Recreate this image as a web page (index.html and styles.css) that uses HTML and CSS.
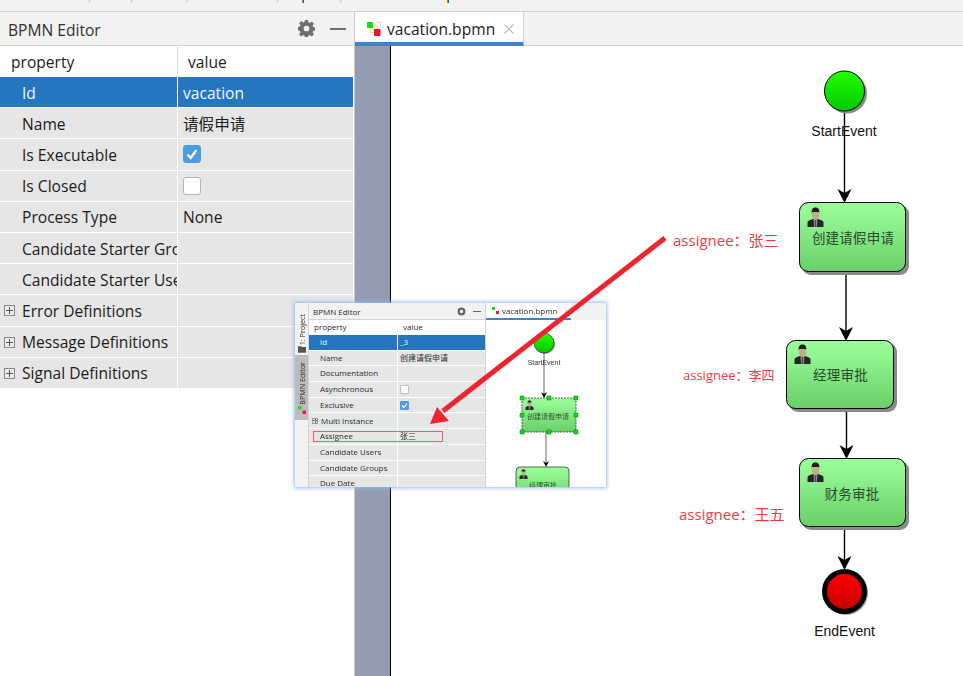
FILE: index.html
```html
<!DOCTYPE html>
<html lang="zh">
<head>
  <meta charset="UTF-8" />
  <title>BPMN Editor</title>
  <link rel="stylesheet" href="styles.css">
</head>
<body>
  <svg class="defs" width="0" height="0">
    <defs>
      <linearGradient id="g-start" x1="0" y1="0" x2="0" y2="1"><stop offset="0" stop-color="#26ff00"/><stop offset="1" stop-color="#00c800"/></linearGradient>
      <linearGradient id="g-end" x1="0" y1="0" x2="0" y2="1"><stop offset="0" stop-color="#ff0000"/><stop offset="1" stop-color="#c80000"/></linearGradient>
      <linearGradient id="g-task" x1="0" y1="0" x2="0" y2="1"><stop offset="0" stop-color="#9cff9c"/><stop offset="1" stop-color="#69d069"/></linearGradient>
      <symbol id="user" viewBox="0 0 17 20">
        <path d="M0.500 20V15.500C0.500 13.800 3 12.800 6 12H11C14 12.800 16.500 13.800 16.500 15.500V20Z" fill="#242424"/>
        <path d="M6.500 12H10.500L10 20H7Z" fill="#8f938f"/>
        <path d="M8 13H9L9.300 20H7.700Z" fill="#4a4a4a"/>
        <ellipse cx="8.500" cy="8" rx="3.800" ry="4.800" fill="#c6aa8c"/>
        <path d="M4.700 6.500C4.300 2 6 0.500 8.500 0.500S12.700 2 12.300 6.500L11.800 5H5.200Z" fill="#1f1f1f"/>
      </symbol>
      <path id="head" d="M0 0L-7 -14L0 -10L7 -14Z" fill="#000"/>
    </defs>
  </svg>

  <div class="crumbs">
    <span class="slash s1"></span><span class="slash s2"></span><span class="slash s3"></span><span class="slash s4"></span><span class="tick t1"></span><span class="slash s5"></span><span class="tick t2"></span>
  </div>

  <div class="main">
    <section class="panel">
      <header class="panel-head">
        <span class="panel-title">BPMN Editor</span>
        <span class="panel-tools">
          <svg class="gear" viewBox="0 0 16 16" width="17" height="17"><path fill="#6e6e6e" fill-rule="evenodd" d="M6.600 0h2.800l.4 2.200 1.300.6 1.900-1.300 2 2-1.300 1.900.6 1.300 2.200.4v2.800l-2.200.4-.6 1.300 1.300 1.900-2 2-1.900-1.300-1.300.6-.4 2.200H6.600l-.4-2.200-1.300-.6-1.900 1.300-2-2 1.300-1.900-.6-1.300L-.5 9.400V6.600l2.200-.4.6-1.300L1 3l2-2 1.900 1.300 1.300-.6zM8 5.300a2.700 2.700 0 1 0 0 5.400 2.700 2.700 0 0 0 0-5.400z"/></svg>
          <span class="dash"></span>
        </span>
      </header>
      <div class="prop-table">
        <div class="prop-row prop-head"><div class="c1">property</div><div class="c2">value</div></div>
        <div class="prop-row selected"><div class="c1 ind">Id</div><div class="c2">vacation</div></div>
        <div class="prop-row"><div class="c1 ind">Name</div><div class="c2">请假申请</div></div>
        <div class="prop-row"><div class="c1 ind">Is Executable</div><div class="c2"><span class="check on"><svg viewBox="0 0 18 18" width="18" height="18"><path d="M4.500 9.500L7.700 13L13.500 5" fill="none" stroke="#fff" stroke-width="2.200"/></svg></span></div></div>
        <div class="prop-row"><div class="c1 ind">Is Closed</div><div class="c2"><span class="check"></span></div></div>
        <div class="prop-row"><div class="c1 ind">Process Type</div><div class="c2">None</div></div>
        <div class="prop-row"><div class="c1 ind">Candidate Starter Groups</div><div class="c2"></div></div>
        <div class="prop-row"><div class="c1 ind">Candidate Starter Users</div><div class="c2"></div></div>
        <div class="prop-row"><div class="c1"><span class="plus"></span>Error Definitions</div><div class="c2"></div></div>
        <div class="prop-row"><div class="c1"><span class="plus"></span>Message Definitions</div><div class="c2"></div></div>
        <div class="prop-row"><div class="c1"><span class="plus"></span>Signal Definitions</div><div class="c2"></div></div>
      </div>
    </section>

    <section class="editor">
      <div class="tabbar">
        <div class="tab">
          <svg class="logo" viewBox="0 0 14 14" width="14" height="14"><path d="M10 0.500H13.500V4" fill="none" stroke="#dcdcdc"/><rect x="3.500" y="4.500" width="6.500" height="6" fill="none" stroke="#f2f24a" stroke-width="1.200"/><rect x="0" y="0" width="6" height="6" fill="#12e012"/><rect x="7" y="7" width="6.500" height="7" fill="#f01040"/></svg>
          <span>vacation.bpmn</span>
          <svg class="close" viewBox="0 0 10 10" width="10" height="10"><path d="M0.500 0.500L9.500 9.500M9.500 0.500L0.500 9.500" stroke="#b9bcc0" stroke-width="1.200"/></svg>
        </div>
      </div>
      <div class="work">
        <div class="gutter"></div>
        <div class="canvas">
          <svg class="diagram" viewBox="391 46 572 630" width="572" height="630">
            <line x1="844.500" y1="111" x2="844.500" y2="196" class="edge"/>
            <use href="#head" x="844.500" y="203"/>
            <line x1="846" y1="272" x2="846" y2="334" class="edge"/>
            <use href="#head" x="846" y="341"/>
            <line x1="846.500" y1="409" x2="846.500" y2="452" class="edge"/>
            <use href="#head" x="846.500" y="459"/>
            <line x1="844.500" y1="527" x2="844.500" y2="563" class="edge"/>
            <use href="#head" x="844.500" y="570"/>

            <circle cx="847" cy="93.500" r="20" fill="#8a8a8a"/>
            <circle cx="844.500" cy="91" r="20" fill="url(#g-start)" stroke="#000"/>
            <text x="844" y="136" class="evt">StartEvent</text>

            <rect x="802" y="205" width="107" height="70" rx="9" fill="#8a8a8a"/>
            <rect x="799.500" y="202.500" width="106" height="69" rx="9" fill="url(#g-task)" stroke="#000"/>
            <use href="#user" x="807" y="207" width="17" height="20"/>
            <text x="853" y="243" class="task">创建请假申请</text>

            <rect x="789" y="343" width="108" height="69" rx="9" fill="#8a8a8a"/>
            <rect x="786.500" y="340.500" width="107" height="68" rx="9" fill="url(#g-task)" stroke="#000"/>
            <use href="#user" x="794" y="344" width="17" height="20"/>
            <text x="840.500" y="380" class="task">经理审批</text>

            <rect x="802" y="461" width="107" height="69" rx="9" fill="#8a8a8a"/>
            <rect x="799.500" y="458.500" width="106" height="68" rx="9" fill="url(#g-task)" stroke="#000"/>
            <use href="#user" x="807" y="462" width="17" height="20"/>
            <text x="852" y="499" class="task">财务审批</text>

            <circle cx="846" cy="593" r="22" fill="#9a9a9a"/>
            <circle cx="844.500" cy="591.500" r="20" fill="url(#g-end)" stroke="#000" stroke-width="5"/>
            <text x="844.500" y="636" class="evt">EndEvent</text>

            <text x="673" y="246" class="note">assignee：张三</text>
            <text x="683" y="380" class="note small">assignee：李四</text>
            <text x="679" y="520" class="note">assignee：王五</text>
          </svg>
        </div>
      </div>
    </section>
  </div>

  <!-- pasted screenshot on top of the editor -->
  <div class="inset">
    <div class="mini-side">
      <div class="mini-side-tab"><span class="vert">1: Project</span><svg viewBox="0 0 10 8" width="8" height="7"><path d="M0 0H4L5 1H10V8H0Z" fill="#555"/></svg></div>
      <div class="mini-side-tab on"><span class="vert">BPMN Editor</span><svg viewBox="0 0 14 14" width="8" height="8"><rect x="0" y="0" width="6" height="6" fill="#12e012"/><rect x="8" y="8" width="6" height="6" fill="#f01040"/></svg></div>
    </div>
    <div class="mini-panel">
      <div class="mini-head">
        <span>BPMN Editor</span>
        <span class="mini-tools"><svg viewBox="0 0 16 16" width="9" height="9"><circle cx="8" cy="8" r="5" fill="none" stroke="#666" stroke-width="4"/></svg><span class="mini-dash"></span></span>
      </div>
      <div class="mini-row mini-top"><div class="m1">property</div><div class="m2">value</div></div>
      <div class="mini-row sel"><div class="m1 ind">Id</div><div class="m2">_3</div></div>
      <div class="mini-row"><div class="m1 ind">Name</div><div class="m2">创建请假申请</div></div>
      <div class="mini-row"><div class="m1 ind">Documentation</div><div class="m2"></div></div>
      <div class="mini-row"><div class="m1 ind">Asynchronous</div><div class="m2"><span class="mini-check"></span></div></div>
      <div class="mini-row"><div class="m1 ind">Exclusive</div><div class="m2"><span class="mini-check on"><svg viewBox="0 0 9 9" width="9" height="9"><path d="M2 4.500L3.800 6.500L7 2.500" fill="none" stroke="#fff" stroke-width="1.200"/></svg></span></div></div>
      <div class="mini-row"><div class="m1"><span class="mini-plus"></span>Multi Instance</div><div class="m2"></div></div>
      <div class="mini-row"><div class="m1 ind">Assignee</div><div class="m2">张三</div></div>
      <div class="mini-row"><div class="m1 ind">Candidate Users</div><div class="m2"></div></div>
      <div class="mini-row"><div class="m1 ind">Candidate Groups</div><div class="m2"></div></div>
      <div class="mini-row"><div class="m1 ind">Due Date</div><div class="m2"></div></div>
    </div>
    <div class="mini-editor">
      <div class="mini-tabbar"><div class="mini-tab"><svg viewBox="0 0 14 14" width="7" height="7"><rect x="0" y="0" width="6" height="6" fill="#12e012"/><rect x="8" y="8" width="6" height="6" fill="#f01040"/></svg>vacation.bpmn<svg class="mini-close" viewBox="0 0 10 10" width="5" height="5"><path d="M0.500 0.500L9.500 9.500M9.500 0.500L0.500 9.500" stroke="#c4c6ca" stroke-width="1.500"/></svg></div></div>
      <svg class="mini-diagram" viewBox="486 320 120 167" width="120" height="167">
        <circle cx="545" cy="344" r="10" fill="#999"/>
        <circle cx="544" cy="343" r="10" fill="url(#g-start)" stroke="#222" stroke-width=".6"/>
        <text x="544" y="365" class="mini-evt">StartEvent</text>
        <line x1="544" y1="353" x2="544" y2="394" class="mini-edge"/>
        <path d="M544 398L541 392L544 394L547 392Z"/>
        <rect x="522" y="398" width="54" height="34" fill="url(#g-task)" stroke="#222" stroke-width=".7" stroke-dasharray="2 1"/>
        <use href="#user" x="525" y="400" width="9" height="10"/>
        <text x="548" y="419" class="mini-task">创建请假申请</text>
        <g fill="#10e010" stroke="#0a7a0a" stroke-width=".5">
          <rect x="520" y="396" width="4" height="4"/><rect x="547" y="396" width="4" height="4"/><rect x="574" y="396" width="4" height="4"/>
          <rect x="520" y="413" width="4" height="4"/><rect x="574" y="413" width="4" height="4"/>
          <rect x="520" y="430" width="4" height="4"/><rect x="547" y="430" width="4" height="4"/><rect x="574" y="430" width="4" height="4"/>
        </g>
        <line x1="546" y1="432" x2="546" y2="463" class="mini-edge"/>
        <path d="M546 467L543 461L546 463L549 461Z"/>
        <rect x="516" y="467" width="53" height="34" rx="4" fill="url(#g-task)" stroke="#222" stroke-width=".7"/>
        <use href="#user" x="519" y="469" width="9" height="10"/>
        <text x="543" y="488" class="mini-task">经理审批</text>
      </svg>
    </div>
  </div>

  <div class="mark-box"></div>
  <svg class="big-arrow" viewBox="0 0 963 676" width="963" height="676">
    <path d="M665 238L443 411" stroke="#ee2430" stroke-width="5" fill="none"/>
    <path d="M430 424L437 407L449 421Z" fill="#ee2430"/>
  </svg>
</body>
</html>
```

FILE: styles.css
```css
* { box-sizing: border-box; }
html, body { margin: 0; height: 100%; }
body { position: relative; width: 963px; height: 676px; overflow: hidden; background: #fff; font-family: "Open Sans", "Noto Sans CJK SC", sans-serif; font-size: 15.600px; color: #1c1c1c; display: flex; flex-direction: column; }
.defs { position: absolute; }

.crumbs { position: relative; height: 12px; flex: none; background: #f2f2f2; border-bottom: 1px solid #d4d4d4; }
.slash { position: absolute; top: 0; width: 1px; height: 3px; background: #c4c4c4; transform: skewX(-25deg); }
.s1 { left: 89px; } .s2 { left: 131px; } .s3 { left: 186px; } .s4 { left: 277px; } .s5 { left: 340px; }
.tick { position: absolute; top: 0; width: 2px; height: 3px; background: linear-gradient(90deg, #c07a20 50%, #1f5fa8 50%); }
.t1 { left: 302px; } .t2 { left: 447px; }

.main { flex: 1; display: flex; min-height: 0; }

.panel { width: 355px; flex: none; border-right: 1px solid #c9c9c9; }
.panel-head { height: 34px; background: #f2f2f2; border-bottom: 1px solid #d4d4d4; display: flex; align-items: center; justify-content: space-between; padding: 0 8px; }
.panel-title { color: #303030; padding-top: 2px; }
.panel-tools { display: flex; align-items: center; gap: 15px; }
.gear { display: block; }
.dash { display: block; width: 16px; height: 2px; background: #707070; }

.prop-table { padding-right: 1px; }
.prop-row { display: flex; height: 31.200px; line-height: 29px; border-bottom: 1px solid #fff; background: #e6e6e6; white-space: nowrap; }
.prop-row .c1 { width: 178px; flex: none; overflow: hidden; border-right: 1px solid #fff; padding-left: 4px; padding-top: 2px; display: flex; align-items: center; }
.prop-row .c1.ind { padding-left: 22px; }
.prop-row .c2 { flex: 1; padding-left: 5px; padding-top: 2px; display: flex; align-items: center; }
.prop-head { background: #fff; height: 31px; }
.prop-head .c1 { padding-left: 11px; padding-top: 3px; border-right: 1px solid #d8d8d8; height: 27px; margin-top: 1px; }
.prop-head .c2 { padding-left: 10px; }
.selected { background: #2675bf; color: #f2f6fb; }

.plus { width: 11px; height: 11px; flex: none; margin-right: 7px; margin-top: -1px; border: 1px solid #8a8a8a; background: linear-gradient(#555, #555) center/7px 1px no-repeat, linear-gradient(#555, #555) center/1px 7px no-repeat, #ececec; }

.check { display: block; width: 18px; height: 18px; margin-top: -2px; border-radius: 3px; background: #fff; border: 1px solid #b4b4b4; }
.check svg { display: block; margin: -1px; }
.check.on { background: #4e9be4; border-color: #4e9be4; }

.editor { flex: 1; display: flex; flex-direction: column; min-width: 0; }
.tabbar { height: 34px; flex: none; background: #f2f2f2; border-bottom: 1px solid #d4d4d4; }
.tab { width: 169px; height: 34px; padding-top: 3px; background: #fff; border-bottom: 4px solid #4083c9; display: flex; align-items: center; padding-left: 12px; gap: 6px; border-right: 1px solid #d4d4d4; color: #1c1c1c; }
.logo { flex: none; margin-top: 1px; }
.close { margin-left: 3px; }

.work { flex: 1; display: flex; min-height: 0; }
.gutter { flex: none; background: #949cb2; border-right: 1px solid #000; width: 36px; }
.canvas { flex: 1; background: #fff; }
.diagram { display: block; }
.edge { stroke: #000; stroke-width: 1.400; }
.evt { font: 14px "Liberation Sans", sans-serif; text-anchor: middle; fill: #111; }
.task { font: 13.500px "Noto Sans CJK SC", sans-serif; text-anchor: middle; fill: #2a482a; letter-spacing: 0.200px; }
.note { font: 15px "Open Sans", "Noto Sans CJK SC", sans-serif; fill: #f03a45; }
.note.small { font-size: 13px; }

.inset { position: absolute; left: 295px; top: 303px; width: 311px; height: 184px; display: flex; overflow: hidden; background: #fff; box-shadow: 0 0 4px 1px #8ebcf0; filter: blur(0.350px); font-size: 8px; color: #2a2a2a; }
.mini-side { width: 14px; flex: none; background: #f2f2f2; border-right: 1px solid #d4d4d4; }
.mini-side-tab { height: 52px; display: flex; flex-direction: column; align-items: center; justify-content: flex-end; padding-bottom: 2px; gap: 1px; }
.mini-side-tab.on { height: 65px; padding-bottom: 6px; background: #bcbcbc; }
.vert { writing-mode: vertical-rl; transform: rotate(180deg); font-size: 7.200px; }
.mini-panel { width: 177px; flex: none; border-right: 1px solid #d4d4d4; }
.mini-head { height: 17px; background: #f2f2f2; border-bottom: 1px solid #d4d4d4; display: flex; align-items: center; justify-content: space-between; padding: 0 4px 0 4px; }
.mini-tools { display: flex; align-items: center; gap: 7px; }
.mini-tools svg { display: block; }
.mini-dash { width: 8px; height: 1px; background: #666; }
.mini-row { display: flex; height: 15.700px; line-height: 14.500px; background: #e6e6e6; border-bottom: 1px solid #fff; white-space: nowrap; }
.mini-top { background: #fff; height: 15px; }
.m1 { width: 89px; flex: none; padding-left: 5px; border-right: 1px solid #fff; display: flex; align-items: center; }
.m1.ind { padding-left: 11px; }
.m2 { flex: 1; padding-left: 2px; display: flex; align-items: center; }
.mini-top .m2 { padding-left: 5px; }
.sel { background: #2675bf; color: #e8f0f8; }
.mini-check { display: block; width: 9px; height: 9px; background: #fff; border: 1px solid #c0c0c0; border-radius: 1px; }
.mini-check svg { display: block; margin: -1px; }
.mini-check.on { background: #4e9be4; border-color: #4e9be4; }
.mini-plus { width: 6px; height: 6px; margin-right: 3px; margin-left: -2px; flex: none; border: 1px solid #999; background: linear-gradient(#777, #777) center/4px 1px no-repeat, linear-gradient(#777, #777) center/1px 4px no-repeat; }
.mini-editor { flex: 1; }
.mini-tabbar { height: 17px; background: #f2f2f2; }
.mini-tab { width: 85px; height: 17px; background: #fff; border-bottom: 2px solid #4083c9; display: flex; align-items: center; gap: 3px; padding-left: 6px; }
.mini-close { margin-left: 3px; }
.mini-diagram { display: block; }
.mini-edge { stroke: #222; stroke-width: .7; }
.mini-evt { font: 7px "Liberation Sans", sans-serif; text-anchor: middle; fill: #333; }
.mini-task { font: 7px "Noto Sans CJK SC", sans-serif; text-anchor: middle; fill: #2c4f2c; }

.mark-box { position: absolute; left: 313px; top: 431px; width: 130px; height: 11px; border: 1.500px solid #e5656e; }
.big-arrow { position: absolute; left: 0; top: 0; }
```
